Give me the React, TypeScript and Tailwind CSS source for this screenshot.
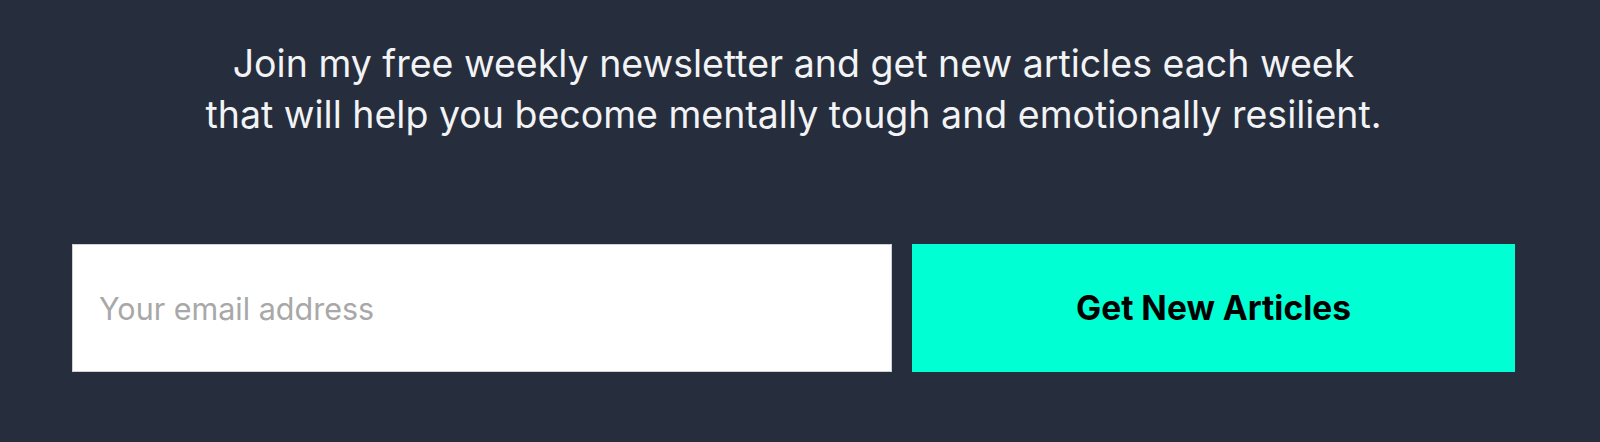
export default function App() {
  return (
    <div className="min-h-[442px] bg-[#262d3d] pl-[72px] pr-[85px] pt-[38px] font-['Inter',sans-serif]">
      <p className="text-center text-[37.5px] leading-[51px] text-[#f2f3f5]">
        Join my free weekly newsletter and get new articles each week
        <br />
        that will help you become mentally tough and emotionally resilient.
      </p>

      <form className="mt-[104px] flex gap-5" onSubmit={(e) => e.preventDefault()}>
        <input
          type="email"
          placeholder="Your email address"
          className="h-[128px] w-[820px] shrink-0 border border-[#cfd3d8] bg-white px-[26px] text-[30.5px] text-gray-800 outline-none placeholder:text-[#a8a8a8]"
        />
        <button
          type="submit"
          className="h-[128px] flex-1 bg-[#00ffd2] text-[33.5px] font-bold text-black"
        >
          Get New Articles
        </button>
      </form>
    </div>
  )
}
